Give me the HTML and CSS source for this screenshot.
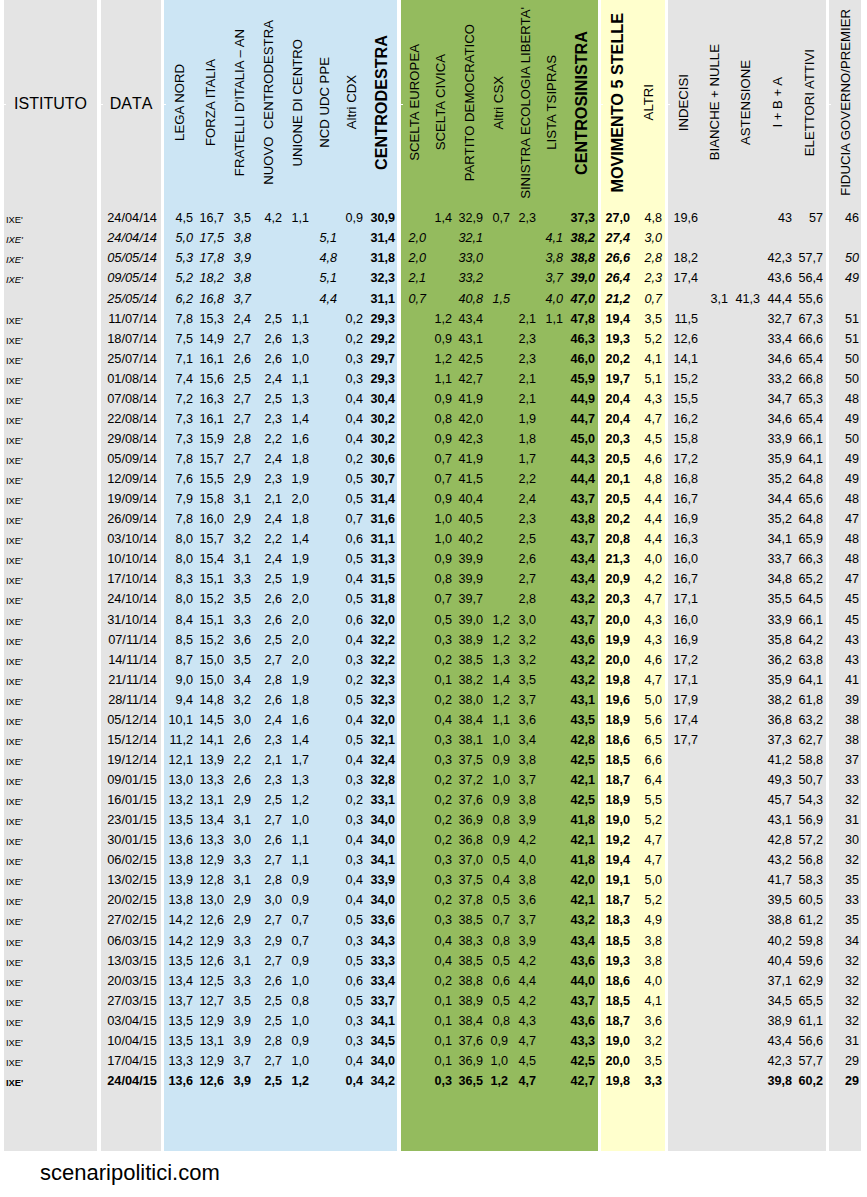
FILE: index.html
```html
<!DOCTYPE html>
<html lang="it">
<head>
<meta charset="utf-8">
<title>Sondaggi IXE'</title>
<link rel="stylesheet" href="styles.css">
</head>
<body>
<table class="polls">
<colgroup>
<col class="c-grey w97"><col class="c-grey w63">
<col class="c-blue w31"><col class="c-blue w31"><col class="c-blue w27"><col class="c-blue w31"><col class="c-blue w26"><col class="c-blue w28"><col class="c-blue w26"><col class="c-blue w37">
<col class="c-green w26"><col class="c-green w26"><col class="c-green w32"><col class="c-green w27"><col class="c-green w26"><col class="c-green w26"><col class="c-green w37">
<col class="c-yellow w31"><col class="c-yellow w36">
<col class="c-grey w31"><col class="c-grey w30"><col class="c-grey w32"><col class="c-grey w32"><col class="c-grey w36">
<col class="c-grey w32">
</colgroup>
<thead>
<tr>
<th class="flat">ISTITUTO</th><th class="flat">DATA</th>
<th><span>LEGA NORD</span></th><th><span>FORZA ITALIA</span></th><th><span>FRATELLI D'ITALIA – AN</span></th><th><span>NUOVO&nbsp; CENTRODESTRA</span></th><th><span>UNIONE DI CENTRO</span></th><th><span>NCD UDC PPE</span></th><th><span>Altri CDX</span></th><th><span class="major">CENTRODESTRA</span></th>
<th><span>SCELTA EUROPEA</span></th><th><span>SCELTA CIVICA</span></th><th><span>PARTITO DEMOCRATICO</span></th><th><span>Altri CSX</span></th><th><span>SINISTRA ECOLOGIA LIBERTA'</span></th><th><span>LISTA TSIPRAS</span></th><th><span class="major">CENTROSINISTRA</span></th>
<th><span class="major">MOVIMENTO 5 STELLE</span></th><th><span>ALTRI</span></th>
<th><span>INDECISI</span></th><th><span>BIANCHE + NULLE</span></th><th><span>ASTENSIONE</span></th><th><span>I + B + A</span></th><th><span>ELETTORI ATTIVI</span></th>
<th><span>FIDUCIA GOVERNO/PREMIER</span></th>
</tr>
</thead>
<tbody>
<tr><td>IXE'</td><td>24/04/14</td><td>4,5</td><td>16,7</td><td>3,5</td><td>4,2</td><td>1,1</td><td></td><td>0,9</td><td>30,9</td><td></td><td>1,4</td><td>32,9</td><td>0,7</td><td>2,3</td><td></td><td>37,3</td><td>27,0</td><td>4,8</td><td>19,6</td><td></td><td></td><td>43</td><td>57</td><td>46</td></tr>
<tr class="alt"><td>IXE'</td><td>24/04/14</td><td>5,0</td><td>17,5</td><td>3,8</td><td></td><td></td><td>5,1</td><td></td><td>31,4</td><td>2,0</td><td></td><td>32,1</td><td></td><td></td><td>4,1</td><td>38,2</td><td>27,4</td><td>3,0</td><td></td><td></td><td></td><td></td><td></td><td></td></tr>
<tr class="alt"><td>IXE'</td><td>05/05/14</td><td>5,3</td><td>17,8</td><td>3,9</td><td></td><td></td><td>4,8</td><td></td><td>31,8</td><td>2,0</td><td></td><td>33,0</td><td></td><td></td><td>3,8</td><td>38,8</td><td>26,6</td><td>2,8</td><td>18,2</td><td></td><td></td><td>42,3</td><td>57,7</td><td>50</td></tr>
<tr class="alt tall"><td>IXE'</td><td>09/05/14</td><td>5,2</td><td>18,2</td><td>3,8</td><td></td><td></td><td>5,1</td><td></td><td>32,3</td><td>2,1</td><td></td><td>33,2</td><td></td><td></td><td>3,7</td><td>39,0</td><td>26,4</td><td>2,3</td><td>17,4</td><td></td><td></td><td>43,6</td><td>56,4</td><td>49</td></tr>
<tr class="alt"><td></td><td>25/05/14</td><td>6,2</td><td>16,8</td><td>3,7</td><td></td><td></td><td>4,4</td><td></td><td>31,1</td><td>0,7</td><td></td><td>40,8</td><td>1,5</td><td></td><td>4,0</td><td>47,0</td><td>21,2</td><td>0,7</td><td></td><td>3,1</td><td>41,3</td><td>44,4</td><td>55,6</td><td></td></tr>
<tr><td>IXE'</td><td>11/07/14</td><td>7,8</td><td>15,3</td><td>2,4</td><td>2,5</td><td>1,1</td><td></td><td>0,2</td><td>29,3</td><td></td><td>1,2</td><td>43,4</td><td></td><td>2,1</td><td>1,1</td><td>47,8</td><td>19,4</td><td>3,5</td><td>11,5</td><td></td><td></td><td>32,7</td><td>67,3</td><td>51</td></tr>
<tr><td>IXE'</td><td>18/07/14</td><td>7,5</td><td>14,9</td><td>2,7</td><td>2,6</td><td>1,3</td><td></td><td>0,2</td><td>29,2</td><td></td><td>0,9</td><td>43,1</td><td></td><td>2,3</td><td></td><td>46,3</td><td>19,3</td><td>5,2</td><td>12,6</td><td></td><td></td><td>33,4</td><td>66,6</td><td>51</td></tr>
<tr><td>IXE'</td><td>25/07/14</td><td>7,1</td><td>16,1</td><td>2,6</td><td>2,6</td><td>1,0</td><td></td><td>0,3</td><td>29,7</td><td></td><td>1,2</td><td>42,5</td><td></td><td>2,3</td><td></td><td>46,0</td><td>20,2</td><td>4,1</td><td>14,1</td><td></td><td></td><td>34,6</td><td>65,4</td><td>50</td></tr>
<tr><td>IXE'</td><td>01/08/14</td><td>7,4</td><td>15,6</td><td>2,5</td><td>2,4</td><td>1,1</td><td></td><td>0,3</td><td>29,3</td><td></td><td>1,1</td><td>42,7</td><td></td><td>2,1</td><td></td><td>45,9</td><td>19,7</td><td>5,1</td><td>15,2</td><td></td><td></td><td>33,2</td><td>66,8</td><td>50</td></tr>
<tr><td>IXE'</td><td>07/08/14</td><td>7,2</td><td>16,3</td><td>2,7</td><td>2,5</td><td>1,3</td><td></td><td>0,4</td><td>30,4</td><td></td><td>0,9</td><td>41,9</td><td></td><td>2,1</td><td></td><td>44,9</td><td>20,4</td><td>4,3</td><td>15,5</td><td></td><td></td><td>34,7</td><td>65,3</td><td>48</td></tr>
<tr><td>IXE'</td><td>22/08/14</td><td>7,3</td><td>16,1</td><td>2,7</td><td>2,3</td><td>1,4</td><td></td><td>0,4</td><td>30,2</td><td></td><td>0,8</td><td>42,0</td><td></td><td>1,9</td><td></td><td>44,7</td><td>20,4</td><td>4,7</td><td>16,2</td><td></td><td></td><td>34,6</td><td>65,4</td><td>49</td></tr>
<tr><td>IXE'</td><td>29/08/14</td><td>7,3</td><td>15,9</td><td>2,8</td><td>2,2</td><td>1,6</td><td></td><td>0,4</td><td>30,2</td><td></td><td>0,9</td><td>42,3</td><td></td><td>1,8</td><td></td><td>45,0</td><td>20,3</td><td>4,5</td><td>15,8</td><td></td><td></td><td>33,9</td><td>66,1</td><td>50</td></tr>
<tr><td>IXE'</td><td>05/09/14</td><td>7,8</td><td>15,7</td><td>2,7</td><td>2,4</td><td>1,8</td><td></td><td>0,2</td><td>30,6</td><td></td><td>0,7</td><td>41,9</td><td></td><td>1,7</td><td></td><td>44,3</td><td>20,5</td><td>4,6</td><td>17,2</td><td></td><td></td><td>35,9</td><td>64,1</td><td>49</td></tr>
<tr><td>IXE'</td><td>12/09/14</td><td>7,6</td><td>15,5</td><td>2,9</td><td>2,3</td><td>1,9</td><td></td><td>0,5</td><td>30,7</td><td></td><td>0,7</td><td>41,5</td><td></td><td>2,2</td><td></td><td>44,4</td><td>20,1</td><td>4,8</td><td>16,8</td><td></td><td></td><td>35,2</td><td>64,8</td><td>49</td></tr>
<tr><td>IXE'</td><td>19/09/14</td><td>7,9</td><td>15,8</td><td>3,1</td><td>2,1</td><td>2,0</td><td></td><td>0,5</td><td>31,4</td><td></td><td>0,9</td><td>40,4</td><td></td><td>2,4</td><td></td><td>43,7</td><td>20,5</td><td>4,4</td><td>16,7</td><td></td><td></td><td>34,4</td><td>65,6</td><td>48</td></tr>
<tr><td>IXE'</td><td>26/09/14</td><td>7,8</td><td>16,0</td><td>2,9</td><td>2,4</td><td>1,8</td><td></td><td>0,7</td><td>31,6</td><td></td><td>1,0</td><td>40,5</td><td></td><td>2,3</td><td></td><td>43,8</td><td>20,2</td><td>4,4</td><td>16,9</td><td></td><td></td><td>35,2</td><td>64,8</td><td>47</td></tr>
<tr><td>IXE'</td><td>03/10/14</td><td>8,0</td><td>15,7</td><td>3,2</td><td>2,2</td><td>1,4</td><td></td><td>0,6</td><td>31,1</td><td></td><td>1,0</td><td>40,2</td><td></td><td>2,5</td><td></td><td>43,7</td><td>20,8</td><td>4,4</td><td>16,3</td><td></td><td></td><td>34,1</td><td>65,9</td><td>48</td></tr>
<tr><td>IXE'</td><td>10/10/14</td><td>8,0</td><td>15,4</td><td>3,1</td><td>2,4</td><td>1,9</td><td></td><td>0,5</td><td>31,3</td><td></td><td>0,9</td><td>39,9</td><td></td><td>2,6</td><td></td><td>43,4</td><td>21,3</td><td>4,0</td><td>16,0</td><td></td><td></td><td>33,7</td><td>66,3</td><td>48</td></tr>
<tr><td>IXE'</td><td>17/10/14</td><td>8,3</td><td>15,1</td><td>3,3</td><td>2,5</td><td>1,9</td><td></td><td>0,4</td><td>31,5</td><td></td><td>0,8</td><td>39,9</td><td></td><td>2,7</td><td></td><td>43,4</td><td>20,9</td><td>4,2</td><td>16,7</td><td></td><td></td><td>34,8</td><td>65,2</td><td>47</td></tr>
<tr class="tall"><td>IXE'</td><td>24/10/14</td><td>8,0</td><td>15,2</td><td>3,5</td><td>2,6</td><td>2,0</td><td></td><td>0,5</td><td>31,8</td><td></td><td>0,7</td><td>39,7</td><td></td><td>2,8</td><td></td><td>43,2</td><td>20,3</td><td>4,7</td><td>17,1</td><td></td><td></td><td>35,5</td><td>64,5</td><td>45</td></tr>
<tr><td>IXE'</td><td>31/10/14</td><td>8,4</td><td>15,1</td><td>3,3</td><td>2,6</td><td>2,0</td><td></td><td>0,6</td><td>32,0</td><td></td><td>0,5</td><td>39,0</td><td>1,2</td><td>3,0</td><td></td><td>43,7</td><td>20,0</td><td>4,3</td><td>16,0</td><td></td><td></td><td>33,9</td><td>66,1</td><td>45</td></tr>
<tr><td>IXE'</td><td>07/11/14</td><td>8,5</td><td>15,2</td><td>3,6</td><td>2,5</td><td>2,0</td><td></td><td>0,4</td><td>32,2</td><td></td><td>0,3</td><td>38,9</td><td>1,2</td><td>3,2</td><td></td><td>43,6</td><td>19,9</td><td>4,3</td><td>16,9</td><td></td><td></td><td>35,8</td><td>64,2</td><td>43</td></tr>
<tr><td>IXE'</td><td>14/11/14</td><td>8,7</td><td>15,0</td><td>3,5</td><td>2,7</td><td>2,0</td><td></td><td>0,3</td><td>32,2</td><td></td><td>0,2</td><td>38,5</td><td>1,3</td><td>3,2</td><td></td><td>43,2</td><td>20,0</td><td>4,6</td><td>17,2</td><td></td><td></td><td>36,2</td><td>63,8</td><td>43</td></tr>
<tr><td>IXE'</td><td>21/11/14</td><td>9,0</td><td>15,0</td><td>3,4</td><td>2,8</td><td>1,9</td><td></td><td>0,2</td><td>32,3</td><td></td><td>0,1</td><td>38,2</td><td>1,4</td><td>3,5</td><td></td><td>43,2</td><td>19,8</td><td>4,7</td><td>17,1</td><td></td><td></td><td>35,9</td><td>64,1</td><td>41</td></tr>
<tr><td>IXE'</td><td>28/11/14</td><td>9,4</td><td>14,8</td><td>3,2</td><td>2,6</td><td>1,8</td><td></td><td>0,5</td><td>32,3</td><td></td><td>0,2</td><td>38,0</td><td>1,2</td><td>3,7</td><td></td><td>43,1</td><td>19,6</td><td>5,0</td><td>17,9</td><td></td><td></td><td>38,2</td><td>61,8</td><td>39</td></tr>
<tr><td>IXE'</td><td>05/12/14</td><td>10,1</td><td>14,5</td><td>3,0</td><td>2,4</td><td>1,6</td><td></td><td>0,4</td><td>32,0</td><td></td><td>0,4</td><td>38,4</td><td>1,1</td><td>3,6</td><td></td><td>43,5</td><td>18,9</td><td>5,6</td><td>17,4</td><td></td><td></td><td>36,8</td><td>63,2</td><td>38</td></tr>
<tr><td>IXE'</td><td>15/12/14</td><td>11,2</td><td>14,1</td><td>2,6</td><td>2,3</td><td>1,4</td><td></td><td>0,5</td><td>32,1</td><td></td><td>0,3</td><td>38,1</td><td>1,0</td><td>3,4</td><td></td><td>42,8</td><td>18,6</td><td>6,5</td><td>17,7</td><td></td><td></td><td>37,3</td><td>62,7</td><td>38</td></tr>
<tr><td>IXE'</td><td>19/12/14</td><td>12,1</td><td>13,9</td><td>2,2</td><td>2,1</td><td>1,7</td><td></td><td>0,4</td><td>32,4</td><td></td><td>0,3</td><td>37,5</td><td>0,9</td><td>3,8</td><td></td><td>42,5</td><td>18,5</td><td>6,6</td><td></td><td></td><td></td><td>41,2</td><td>58,8</td><td>37</td></tr>
<tr><td>IXE'</td><td>09/01/15</td><td>13,0</td><td>13,3</td><td>2,6</td><td>2,3</td><td>1,3</td><td></td><td>0,3</td><td>32,8</td><td></td><td>0,2</td><td>37,2</td><td>1,0</td><td>3,7</td><td></td><td>42,1</td><td>18,7</td><td>6,4</td><td></td><td></td><td></td><td>49,3</td><td>50,7</td><td>33</td></tr>
<tr><td>IXE'</td><td>16/01/15</td><td>13,2</td><td>13,1</td><td>2,9</td><td>2,5</td><td>1,2</td><td></td><td>0,2</td><td>33,1</td><td></td><td>0,2</td><td>37,6</td><td>0,9</td><td>3,8</td><td></td><td>42,5</td><td>18,9</td><td>5,5</td><td></td><td></td><td></td><td>45,7</td><td>54,3</td><td>32</td></tr>
<tr><td>IXE'</td><td>23/01/15</td><td>13,5</td><td>13,4</td><td>3,1</td><td>2,7</td><td>1,0</td><td></td><td>0,3</td><td>34,0</td><td></td><td>0,2</td><td>36,9</td><td>0,8</td><td>3,9</td><td></td><td>41,8</td><td>19,0</td><td>5,2</td><td></td><td></td><td></td><td>43,1</td><td>56,9</td><td>31</td></tr>
<tr><td>IXE'</td><td>30/01/15</td><td>13,6</td><td>13,3</td><td>3,0</td><td>2,6</td><td>1,1</td><td></td><td>0,4</td><td>34,0</td><td></td><td>0,2</td><td>36,8</td><td>0,9</td><td>4,2</td><td></td><td>42,1</td><td>19,2</td><td>4,7</td><td></td><td></td><td></td><td>42,8</td><td>57,2</td><td>30</td></tr>
<tr><td>IXE'</td><td>06/02/15</td><td>13,8</td><td>12,9</td><td>3,3</td><td>2,7</td><td>1,1</td><td></td><td>0,3</td><td>34,1</td><td></td><td>0,3</td><td>37,0</td><td>0,5</td><td>4,0</td><td></td><td>41,8</td><td>19,4</td><td>4,7</td><td></td><td></td><td></td><td>43,2</td><td>56,8</td><td>32</td></tr>
<tr><td>IXE'</td><td>13/02/15</td><td>13,9</td><td>12,8</td><td>3,1</td><td>2,8</td><td>0,9</td><td></td><td>0,4</td><td>33,9</td><td></td><td>0,3</td><td>37,5</td><td>0,4</td><td>3,8</td><td></td><td>42,0</td><td>19,1</td><td>5,0</td><td></td><td></td><td></td><td>41,7</td><td>58,3</td><td>35</td></tr>
<tr><td>IXE'</td><td>20/02/15</td><td>13,8</td><td>13,0</td><td>2,9</td><td>3,0</td><td>0,9</td><td></td><td>0,4</td><td>34,0</td><td></td><td>0,2</td><td>37,8</td><td>0,5</td><td>3,6</td><td></td><td>42,1</td><td>18,7</td><td>5,2</td><td></td><td></td><td></td><td>39,5</td><td>60,5</td><td>33</td></tr>
<tr class="tall"><td>IXE'</td><td>27/02/15</td><td>14,2</td><td>12,6</td><td>2,9</td><td>2,7</td><td>0,7</td><td></td><td>0,5</td><td>33,6</td><td></td><td>0,3</td><td>38,5</td><td>0,7</td><td>3,7</td><td></td><td>43,2</td><td>18,3</td><td>4,9</td><td></td><td></td><td></td><td>38,8</td><td>61,2</td><td>35</td></tr>
<tr><td>IXE'</td><td>06/03/15</td><td>14,2</td><td>12,9</td><td>3,3</td><td>2,9</td><td>0,7</td><td></td><td>0,3</td><td>34,3</td><td></td><td>0,4</td><td>38,3</td><td>0,8</td><td>3,9</td><td></td><td>43,4</td><td>18,5</td><td>3,8</td><td></td><td></td><td></td><td>40,2</td><td>59,8</td><td>34</td></tr>
<tr><td>IXE'</td><td>13/03/15</td><td>13,5</td><td>12,6</td><td>3,1</td><td>2,7</td><td>0,9</td><td></td><td>0,5</td><td>33,3</td><td></td><td>0,4</td><td>38,5</td><td>0,5</td><td>4,2</td><td></td><td>43,6</td><td>19,3</td><td>3,8</td><td></td><td></td><td></td><td>40,4</td><td>59,6</td><td>32</td></tr>
<tr><td>IXE'</td><td>20/03/15</td><td>13,4</td><td>12,5</td><td>3,3</td><td>2,6</td><td>1,0</td><td></td><td>0,6</td><td>33,4</td><td></td><td>0,2</td><td>38,8</td><td>0,6</td><td>4,4</td><td></td><td>44,0</td><td>18,6</td><td>4,0</td><td></td><td></td><td></td><td>37,1</td><td>62,9</td><td>32</td></tr>
<tr><td>IXE'</td><td>27/03/15</td><td>13,7</td><td>12,7</td><td>3,5</td><td>2,5</td><td>0,8</td><td></td><td>0,5</td><td>33,7</td><td></td><td>0,1</td><td>38,9</td><td>0,5</td><td>4,2</td><td></td><td>43,7</td><td>18,5</td><td>4,1</td><td></td><td></td><td></td><td>34,5</td><td>65,5</td><td>32</td></tr>
<tr><td>IXE'</td><td>03/04/15</td><td>13,5</td><td>12,9</td><td>3,9</td><td>2,5</td><td>1,0</td><td></td><td>0,3</td><td>34,1</td><td></td><td>0,1</td><td>38,4</td><td>0,8</td><td>4,3</td><td></td><td>43,6</td><td>18,7</td><td>3,6</td><td></td><td></td><td></td><td>38,9</td><td>61,1</td><td>32</td></tr>
<tr><td>IXE'</td><td>10/04/15</td><td>13,5</td><td>13,1</td><td>3,9</td><td>2,8</td><td>0,9</td><td></td><td>0,3</td><td>34,5</td><td></td><td>0,1</td><td>37,6</td><td class="nudge">0,9</td><td>4,7</td><td></td><td>43,3</td><td>19,0</td><td>3,2</td><td></td><td></td><td></td><td>43,4</td><td>56,6</td><td>31</td></tr>
<tr><td>IXE'</td><td>17/04/15</td><td>13,3</td><td>12,9</td><td>3,7</td><td>2,7</td><td>1,0</td><td></td><td>0,4</td><td>34,0</td><td></td><td>0,1</td><td>36,9</td><td class="nudge">1,0</td><td>4,5</td><td></td><td>42,5</td><td>20,0</td><td>3,5</td><td></td><td></td><td></td><td>42,3</td><td>57,7</td><td>29</td></tr>
<tr class="latest"><td>IXE'</td><td>24/04/15</td><td>13,6</td><td>12,6</td><td>3,9</td><td>2,5</td><td>1,2</td><td></td><td>0,4</td><td>34,2</td><td></td><td>0,3</td><td>36,5</td><td class="nudge">1,2</td><td>4,7</td><td></td><td>42,7</td><td>19,8</td><td>3,3</td><td></td><td></td><td></td><td>39,8</td><td>60,2</td><td>29</td></tr>
<tr class="filler"><td></td><td></td><td></td><td></td><td></td><td></td><td></td><td></td><td></td><td></td><td></td><td></td><td></td><td></td><td></td><td></td><td></td><td></td><td></td><td></td><td></td><td></td><td></td><td></td><td></td></tr>
</tbody>
</table>
<footer class="source">scenaripolitici.com</footer>
</body>
</html>
```

FILE: styles.css
```css
html, body {
  margin: 0;
  background: #fff;
}

body {
  padding-left: 4px;
  font-family: "Liberation Sans", Arial, sans-serif;
  color: #000;
}

.polls {
  border-collapse: separate;
  border-spacing: 0;
  table-layout: fixed;
  width: 857px;
}

.c-grey { background: #e4e4e4; }
.c-blue { background: #cce5f4; }
.c-green { background: #94bb5e; }
.c-yellow { background: #ffffcd; }

.w26 { width: 26px; }
.w27 { width: 27px; }
.w28 { width: 28px; }
.w30 { width: 30px; }
.w31 { width: 31px; }
.w32 { width: 32px; }
.w36 { width: 36px; }
.w37 { width: 37px; }
.w63 { width: 63px; }
.w97 { width: 97px; }

/* Group separators: white bands on the last column of each block. */
th:nth-child(1), td:nth-child(1) { border-right: 4px solid #fff; }
th:nth-child(2), td:nth-child(2) { border-right: 3px solid #fff; }
th:nth-child(10), td:nth-child(10) { border-right: 4px solid #fff; }
th:nth-child(17), td:nth-child(17),
th:nth-child(19), td:nth-child(19),
th:nth-child(24), td:nth-child(24) { border-right: 3px solid #fff; }

thead tr { height: 208px; }

th {
  position: relative;
  padding: 0 0 0 1px;
  font-weight: 400;
  font-size: 13.2px;
  text-align: center;
  vertical-align: middle;
  overflow: visible;
}

/* Small white nick on the left edge of every coloured block. */
th:nth-child(1)::before,
th:nth-child(2)::before,
th:nth-child(3)::before,
th:nth-child(11)::before,
th:nth-child(18)::before,
th:nth-child(20)::before,
th:nth-child(25)::before {
  content: "";
  position: absolute;
  left: 0;
  top: 104px;
  width: 2px;
  height: 1px;
  background: #fff;
}

th > span {
  display: inline-block;
  writing-mode: vertical-rl;
  transform: rotate(180deg);
  white-space: nowrap;
  line-height: 1;
}

th.flat {
  padding: 0;
  font-size: 16px;
  font-kerning: none;
}

th > .major { font-size: 16.2px; font-weight: 700; }

tbody tr { height: 20px; }
tbody tr.tall { height: 21px; }
tbody tr.filler { height: 60px; }

td {
  padding: 0 1px 0 0;
  font-size: 12.6px;
  line-height: 1;
  text-align: right;
  vertical-align: middle;
  white-space: nowrap;
}

td:nth-child(1) {
  padding: 3px 0 0 2px;
  text-align: left;
  font-size: 9.4px;
}

td:nth-child(2) { padding-right: 4px; font-size: 12.8px; }
td:nth-child(3), td:nth-child(4), td:nth-child(5), td:nth-child(6),
td:nth-child(13), td:nth-child(14), td:nth-child(15), td:nth-child(18) { padding-right: 2px; }
td:nth-child(10) { padding-right: 2px; font-weight: 700; }
td:nth-child(17), td:nth-child(18) { font-weight: 700; }
td:nth-child(17) { padding-right: 3px; }
td:nth-child(19), td:nth-child(24) { padding-right: 3px; }
td:nth-child(25) { padding-right: 2px; }

td.nudge { padding-right: 4px; }

.alt td:nth-child(-n+9),
.alt td:nth-child(n+11):nth-child(-n+19),
.alt td:nth-child(25) { font-style: italic; }

.latest td { font-weight: 700; }

.source {
  margin: 7px 0 0 36px;
  font-size: 22px;
  line-height: 30px;
}
```
